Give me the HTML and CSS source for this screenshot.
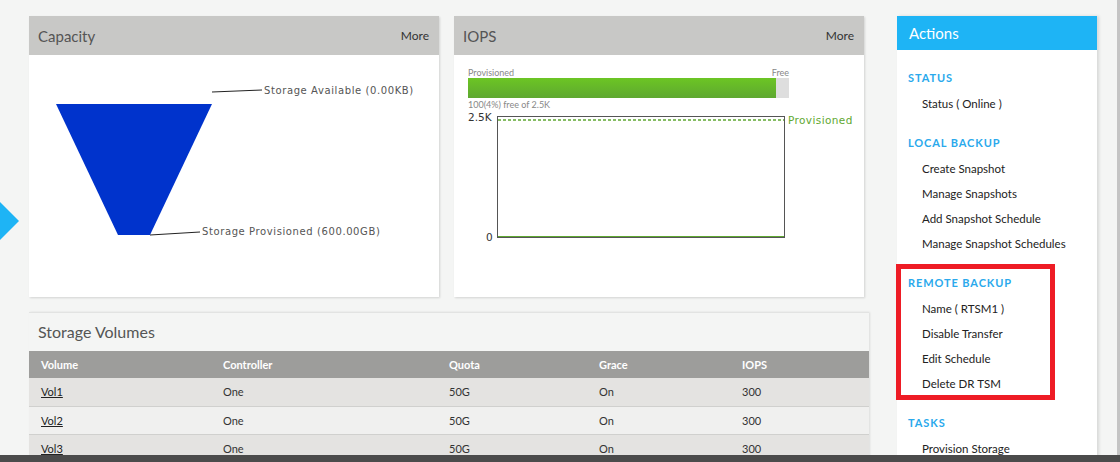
FILE: index.html
```html
<!DOCTYPE html>
<html>
<head>
<meta charset="utf-8">
<link rel="stylesheet" href="styles.css">
</head>
<body>
<div class="side-arrow"></div>
<div class="page">
  <div class="main">
    <div class="top-row">
      <section class="card">
        <div class="card-head"><span class="card-title">Capacity</span><span class="more">More</span></div>
        <div class="card-body">
          <svg class="funnel" width="410" height="242" viewBox="0 0 410 242">
            <polygon points="27,49 183,49 121,180 89,180" fill="#0033cc"/>
            <line x1="183" y1="37" x2="233" y2="35" stroke="#222" stroke-width="1"/>
            <text x="235" y="39" class="funnel-label">Storage Available (0.00KB)</text>
            <line x1="121" y1="180" x2="171" y2="177" stroke="#222" stroke-width="1"/>
            <text x="173" y="180" class="funnel-label">Storage Provisioned (600.00GB)</text>
          </svg>
        </div>
      </section>
      <section class="card">
        <div class="card-head"><span class="card-title">IOPS</span><span class="more">More</span></div>
        <div class="card-body iops-body">
          <div class="bar-labels"><span>Provisioned</span><span>Free</span></div>
          <div class="bar"><div class="bar-fill" style="width:96%"></div></div>
          <div class="bar-note">100(4%) free of 2.5K</div>
          <svg class="iops-chart" width="390" height="135" viewBox="0 0 390 135">
            <text x="0" y="11" class="axis">2.5K</text>
            <text x="18" y="131" class="axis">0</text>
            <rect x="29.5" y="6.5" width="287" height="121" fill="none" stroke="#555" stroke-width="1"/>
            <line x1="30" y1="10" x2="316" y2="10" stroke="#5fa832" stroke-width="1.5" stroke-dasharray="3,2"/>
            <line x1="30" y1="126.5" x2="316" y2="126.5" stroke="#5fa832" stroke-width="1"/>
            <text x="320" y="14" class="prov">Provisioned</text>
          </svg>
        </div>
      </section>
    </div>
    <section class="volumes">
      <h2 class="vol-title">Storage Volumes</h2>
      <table class="vol-table">
        <thead>
          <tr><th class="c1">Volume</th><th class="c2">Controller</th><th class="c3">Quota</th><th class="c4">Grace</th><th class="c5">IOPS</th></tr>
        </thead>
        <tbody>
          <tr><td><a href="#">Vol1</a></td><td>One</td><td>50G</td><td>On</td><td>300</td></tr>
          <tr><td><a href="#">Vol2</a></td><td>One</td><td>50G</td><td>On</td><td>300</td></tr>
          <tr><td><a href="#">Vol3</a></td><td>One</td><td>50G</td><td>On</td><td>300</td></tr>
        </tbody>
      </table>
    </section>
  </div>
  <aside class="actions">
    <div class="actions-head">Actions</div>
    <div class="actions-body">
      <div class="group">
        <div class="group-title">STATUS</div>
        <div class="item">Status ( Online )</div>
      </div>
      <div class="group">
        <div class="group-title">LOCAL BACKUP</div>
        <div class="item">Create Snapshot</div>
        <div class="item">Manage Snapshots</div>
        <div class="item">Add Snapshot Schedule</div>
        <div class="item">Manage Snapshot Schedules</div>
      </div>
      <div class="group highlighted">
        <div class="group-title">REMOTE BACKUP</div>
        <div class="item">Name ( RTSM1 )</div>
        <div class="item">Disable Transfer</div>
        <div class="item">Edit Schedule</div>
        <div class="item">Delete DR TSM</div>
        <div class="red-box"></div>
      </div>
      <div class="group">
        <div class="group-title">TASKS</div>
        <div class="item">Provision Storage</div>
      </div>
    </div>
  </aside>
</div>
<div class="right-strip"></div>
<div class="footer-bar"></div>
</body>
</html>
```

FILE: styles.css
```css
html, body {
  margin: 0;
  padding: 0;
  height: 100%;
  overflow: hidden;
}
body {
  background: #f4f5f4;
  font-family: "Lato", "Open Sans", sans-serif;
  color: #333;
  position: relative;
}
.page {
  display: flex;
  align-items: flex-start;
  padding: 16px 0 0 29px;
}
.main {
  width: 840px;
  display: flex;
  flex-direction: column;
  gap: 15px;
}
.top-row {
  display: flex;
  gap: 15px;
}
.card {
  width: 410px;
  height: 281px;
  background: #fff;
  box-shadow: 1px 1px 2px rgba(0,0,0,0.14);
  display: flex;
  flex-direction: column;
}
.card-head {
  height: 39px;
  background: #c8c8c6;
  display: flex;
  align-items: center;
  justify-content: space-between;
  padding: 0 10px 0 9px;
}
.card-title {
  font-size: 15px;
  color: #555;
}
.more {
  font-size: 12px;
  color: #333;
}
.card-body {
  flex: 1;
  position: relative;
}
.funnel { display: block; }
.funnel-label {
  font-family: "DejaVu Sans", sans-serif;
  font-size: 10px;
  letter-spacing: 0.6px;
  fill: #555;
}
.iops-body {
  padding: 12px 0 0 14px;
}
.bar-labels {
  width: 321px;
  display: flex;
  justify-content: space-between;
  font-size: 9px;
  line-height: 11px;
  color: #888;
}
.bar {
  width: 321px;
  height: 20px;
  background: #dedede;
}
.bar-fill {
  height: 100%;
  background: linear-gradient(#6cc524, #5ea830);
}
.bar-note {
  font-size: 9px;
  line-height: 12px;
  color: #888;
  margin-top: 1px;
}
.iops-chart { display: block; margin-top: -1px; }
.axis {
  font-family: "DejaVu Sans", sans-serif;
  font-size: 10.5px;
  fill: #333;
}
.prov {
  font-family: "DejaVu Sans", sans-serif;
  font-size: 10.5px;
  letter-spacing: 0.4px;
  fill: #5fa832;
}
.volumes {
  width: 840px;
  border-top: 1px solid #e2e3e2;
  box-shadow: 1px 0 2px rgba(0,0,0,0.1);
  background: #f4f5f4;
}
.vol-title {
  margin: 0;
  height: 38px;
  padding-left: 9px;
  font-size: 16px;
  font-weight: normal;
  color: #555;
  line-height: 38px;
}
.vol-table {
  width: 840px;
  border-collapse: collapse;
  table-layout: fixed;
  font-size: 11px;
}
.vol-table th,
.vol-table td {
  box-sizing: border-box;
}
.vol-table th {
  background: #9d9d9b;
  color: #fff;
  text-align: left;
  font-weight: bold;
  height: 27px;
  padding: 0 0 0 12px;
}
.c1 { width: 182px; }
.c2 { width: 226px; }
.c3 { width: 150px; }
.c4 { width: 143px; }
.vol-table td {
  height: 28px;
  padding: 0 0 0 12px;
  border-bottom: 1px solid #d0d0ce;
  color: #333;
}
.vol-table tbody tr:nth-child(odd) td { background: #e4e3e1; }
.vol-table tbody tr:nth-child(even) td { background: #f0f0ef; }
.vol-table a { color: #222; }
.actions {
  margin-left: 28px;
  width: 200px;
  background: #fff;
  box-shadow: 2px 0 3px rgba(0,0,0,0.12);
}
.actions-head {
  height: 34px;
  background: #1eb4f5;
  color: #fff;
  font-size: 15px;
  line-height: 34px;
  padding-left: 12px;
}
.actions-body {
  padding: 15px 0 40px;
}
.group {
  margin-bottom: 14px;
  position: relative;
}
.group-title {
  height: 26px;
  line-height: 26px;
  padding-left: 11px;
  font-size: 11px;
  font-weight: bold;
  letter-spacing: 0.9px;
  color: #2aa9ec;
}
.item {
  height: 25px;
  line-height: 25px;
  padding-left: 25px;
  font-size: 11.5px;
  color: #222;
}
.red-box {
  position: absolute;
  left: -1px;
  top: -6px;
  width: 159px;
  height: 136px;
  box-sizing: border-box;
  border: 5px solid #ee1c25;
}
.side-arrow {
  position: absolute;
  left: -19px;
  top: 202px;
  width: 38px;
  height: 38px;
  background: #1eb4f5;
  clip-path: polygon(50% 0, 100% 50%, 50% 100%, 0 50%);
}
.right-strip {
  position: fixed;
  right: 0;
  top: 0;
  bottom: 0;
  width: 3px;
  background: #c4c4c4;
}
.footer-bar {
  position: fixed;
  left: 0;
  right: 0;
  bottom: 0;
  height: 7px;
  background: #4b4b4b;
}
```
